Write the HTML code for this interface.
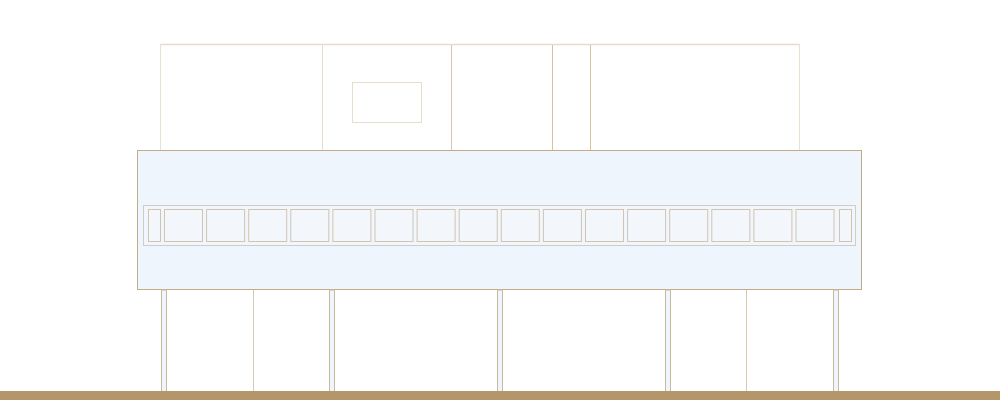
<!DOCTYPE html>
<html><head><style>html,body{margin:0;padding:0;background:#fff}svg{display:block}</style></head>
<body>
<svg width="1000" height="400" viewBox="0 0 1000 400" xmlns="http://www.w3.org/2000/svg">
<rect x="0" y="0" width="1000" height="400" fill="#fff"/>
<!-- upper volume -->
<rect x="160.5" y="44.5" width="639" height="106" fill="#fff" stroke="#e8e0d2" stroke-width="1"/>
<line x1="160.5" y1="44.5" x2="799.5" y2="44.5" stroke="#e6ddcd" stroke-width="1.5"/>
<line x1="322.5" y1="45" x2="322.5" y2="150" stroke="#e6ddcd" stroke-width="1"/>
<line x1="451.5" y1="45" x2="451.5" y2="150" stroke="#d4c6b3" stroke-width="1"/>
<line x1="552.5" y1="45" x2="552.5" y2="150" stroke="#d8c29e" stroke-width="1"/>
<line x1="590.5" y1="45" x2="590.5" y2="150" stroke="#d8c29e" stroke-width="1"/>
<rect x="352.5" y="82.5" width="69" height="40" fill="#fff" stroke="#e6ddcd" stroke-width="1"/>
<!-- main volume -->
<rect x="137.5" y="150.5" width="724" height="139" fill="#eef5fd" stroke="#c4ab88" stroke-width="1"/>
<rect x="143.5" y="205.5" width="712" height="40" fill="#f1f6fc" stroke="#d3ccc2" stroke-width="1"/>
<rect x="148.5" y="209.5" width="12" height="32" fill="#f3f7fc" stroke="#d1c4b2" stroke-width="1"/>
<rect x="839.5" y="209.5" width="12" height="32" fill="#f3f7fc" stroke="#d1c4b2" stroke-width="1"/>
<g fill="#f3f7fc" stroke="#d1c4b2" stroke-width="1">
<rect x="164.5" y="209.5" width="38" height="32"/>
<rect x="206.6" y="209.5" width="38" height="32"/>
<rect x="248.7" y="209.5" width="38" height="32"/>
<rect x="290.8" y="209.5" width="38" height="32"/>
<rect x="332.9" y="209.5" width="38" height="32"/>
<rect x="375.0" y="209.5" width="38" height="32"/>
<rect x="417.1" y="209.5" width="38" height="32"/>
<rect x="459.2" y="209.5" width="38" height="32"/>
<rect x="501.3" y="209.5" width="38" height="32"/>
<rect x="543.4" y="209.5" width="38" height="32"/>
<rect x="585.5" y="209.5" width="38" height="32"/>
<rect x="627.6" y="209.5" width="38" height="32"/>
<rect x="669.7" y="209.5" width="38" height="32"/>
<rect x="711.8" y="209.5" width="38" height="32"/>
<rect x="753.9" y="209.5" width="38" height="32"/>
<rect x="796.0" y="209.5" width="38" height="32"/>
</g>
<!-- pilotis -->
<g fill="#eef5fd" stroke="#c9b89c" stroke-width="1">
<rect x="161.5" y="290" width="5" height="102"/>
<rect x="329.5" y="290" width="5" height="102"/>
<rect x="497.5" y="290" width="5" height="102"/>
<rect x="665.5" y="290" width="5" height="102"/>
<rect x="833.5" y="290" width="5" height="102"/>
</g>
<line x1="253.5" y1="290" x2="253.5" y2="392" stroke="#d4c8b6" stroke-width="1"/>
<line x1="746.5" y1="290" x2="746.5" y2="392" stroke="#d8c8ac" stroke-width="1"/>
<!-- ground -->
<rect x="0" y="391" width="1000" height="9" fill="#b3976a"/>
</svg>
</body></html>
